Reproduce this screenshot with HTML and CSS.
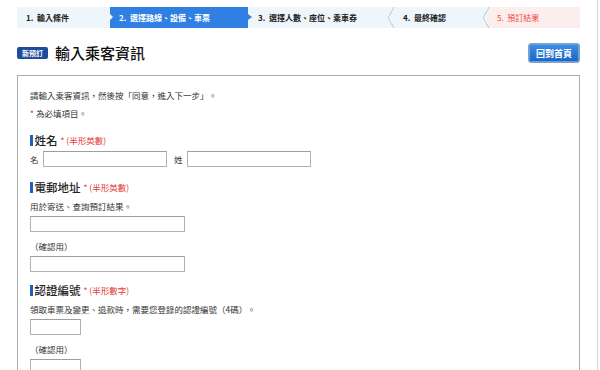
FILE: index.html
```html
<!DOCTYPE html>
<html lang="zh-Hant">
<head>
<meta charset="utf-8">
<link rel="stylesheet" href="styles.css">
</head>
<body>
<div class="page">
  <div class="wrap">
    <ol class="steps">
      <li class="step s1">1.&nbsp; 輸入條件</li>
      <li class="step s2 active">2.&nbsp; 選擇路線、設備、車票</li>
      <li class="step s3">3.&nbsp; 選擇人數、座位、乘車券</li>
      <li class="step s4">4.&nbsp; 最終確認</li>
      <li class="step s5 last">5.&nbsp; 預訂結果</li>
    </ol>

    <div class="titlebar">
      <div class="title-left">
        <span class="badge">新預訂</span>
        <h1 class="title">輸入乘客資訊</h1>
      </div>
      <button class="home-btn">回到首頁</button>
    </div>

    <div class="panel">
      <p class="txt intro">請輸入乘客資訊，然後按「同意，進入下一步」。</p>
      <p class="txt note"><span class="req">*</span> 為必填項目。</p>

      <h2 class="heading h-name"><span class="hlabel">姓名</span><span class="req-note">* (半形英數)</span></h2>
      <div class="name-row">
        <label class="txt lbl">名</label><input class="field name-field" type="text">
        <label class="txt lbl lbl2">姓</label><input class="field name-field" type="text">
      </div>

      <h2 class="heading h-mail"><span class="hlabel">電郵地址</span><span class="req-note">* (半形英數)</span></h2>
      <p class="txt help">用於寄送、查詢預訂結果。</p>
      <input class="field mail-field" type="text">
      <p class="txt confirm">（確認用）</p>
      <input class="field mail-field" type="text">

      <h2 class="heading h-code"><span class="hlabel">認證編號</span><span class="req-note">* (半形數字)</span></h2>
      <p class="txt help">領取車票及變更、退款時，需要您登錄的認證編號（4碼）。</p>
      <input class="field code-field" type="text">
      <p class="txt confirm">（確認用）</p>
      <input class="field code-field" type="text">
    </div>
  </div>
</div>
</body>
</html>
```

FILE: styles.css
```css
* { box-sizing: border-box; }
html, body { margin: 0; padding: 0; background: #fff; }
body {
  font-family: "Noto Sans CJK TC", "Noto Sans", sans-serif;
  color: #222;
  overflow: hidden;
}
.page {
  width: 598px;
  height: 370px;
  border-right: 1px solid #cdd5df;
  overflow: hidden;
}
.wrap {
  width: 563px;
  margin-left: 17px;
  padding-top: 7px;
}

/* steps */
.steps {
  display: flex;
  list-style: none;
  margin: 0;
  padding: 0;
  height: 21px;
}
.step {
  position: relative;
  height: 21px;
  line-height: 21px;
  font-size: 8px;
  font-weight: bold;
  color: #222;
  background: #eef5fb;
  padding-left: 9px;
  white-space: nowrap;
}
.s1 { width: 93px; }
.s2 { width: 138px; }
.s3 { width: 145px; padding-left: 10px; }
.s4 { width: 95px; padding-left: 10px; }
.s5 { width: 92px; padding-left: 9px; }
.step.active { background: #2f80e2; color: #fff; }
.step.last { background: #fdeeee; color: #ee4b3f; font-weight: normal; }

.s1::after {
  content: "";
  position: absolute;
  right: -3px;
  top: 7px;
  border-left: 3px solid #eef5fb;
  border-top: 3px solid transparent;
  border-bottom: 3px solid transparent;
  z-index: 2;
}
.s2::after {
  content: "";
  position: absolute;
  right: -4px;
  top: 7px;
  border-left: 4px solid #2f80e2;
  border-top: 3.5px solid transparent;
  border-bottom: 3.5px solid transparent;
  z-index: 2;
}
.s3::after, .s4::after {
  content: "";
  position: absolute;
  right: -1px;
  top: 0;
  width: 6px;
  height: 21px;
  background:
    linear-gradient(to bottom right, transparent 46%, #c9ced4 48%, #c9ced4 56%, transparent 58%) top / 6px 10.5px no-repeat,
    linear-gradient(to top right, transparent 46%, #c9ced4 48%, #c9ced4 56%, transparent 58%) bottom / 6px 10.5px no-repeat;
  z-index: 2;
}

/* title */
.titlebar {
  display: flex;
  justify-content: space-between;
  align-items: center;
  margin-top: 15px;
  height: 20px;
}
.title-left { display: flex; align-items: center; }
.badge {
  display: inline-block;
  width: 31px;
  height: 12px;
  line-height: 12px;
  text-align: center;
  font-size: 7px;
  font-weight: bold;
  color: #fff;
  background: #1d4c9b;
  border-radius: 2px;
}
.title {
  margin: 0 0 0 7px;
  font-size: 15px;
  font-weight: 500;
  line-height: 20px;
  color: #111;
}
.home-btn {
  width: 52px;
  height: 20px;
  padding: 0;
  font-family: inherit;
  font-size: 9px;
  font-weight: bold;
  color: #fff;
  background: linear-gradient(#3d90e6, #1b63c6);
  border: 1px solid #8d9fb4;
  border-radius: 3px;
  box-shadow: inset 0 0 0 1px #5fa3ea;
}

/* panel */
.panel {
  margin-top: 12px;
  border: 1px solid #acacac;
  padding: 13px 12px 20px;
  height: 320px;
}
.txt {
  margin: 0;
  font-size: 8.5px;
  line-height: 12px;
  color: #333;
}
.note { margin-top: 6px; }
.req { color: #e53935; }
.heading {
  display: flex;
  align-items: center;
  margin: 0;
  height: 14px;
  font-size: 11.5px;
  font-weight: 500;
  color: #222;
}
.heading::before {
  content: "";
  width: 2.5px;
  height: 11px;
  background: #1f5fbe;
  margin-right: 2px;
}
.req-note {
  font-size: 8.5px;
  color: #e53935;
  margin-left: 3px;
  font-weight: normal;
}
.h-name { margin-top: 14px; }
.h-mail { margin-top: 13px; }
.h-code { margin-top: 11px; }

.name-row {
  display: flex;
  align-items: center;
  margin-top: 4px;
  height: 16px;
}
.lbl { width: 13px; }
.lbl2 { margin-left: 7px; }
.field {
  display: block;
  height: 16px;
  margin: 4px 0 0;
  padding: 0;
  border: 1px solid #b2b2b2;
  border-top-color: #9e9e9e;
  background: #fff;
}
.name-row .field { margin: 0; }
.name-field { width: 124px; }
.mail-field { width: 155px; }
.code-field { width: 51px; }
.help { margin-top: 6px; }
.confirm { margin-top: 8px; }
```
